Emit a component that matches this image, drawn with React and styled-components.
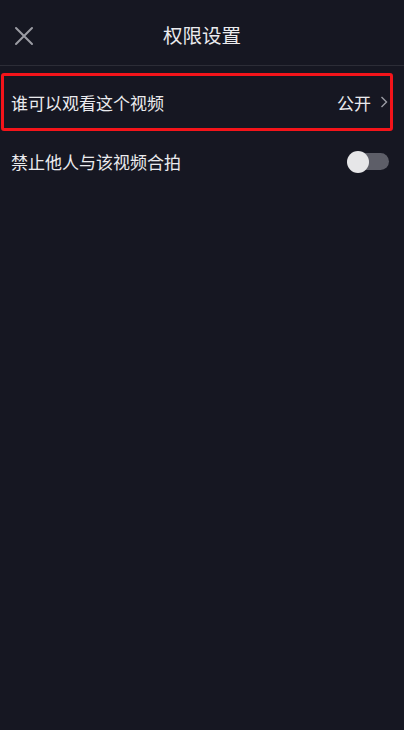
import React from 'react';
import styled, { createGlobalStyle } from 'styled-components';

const COLORS = {
  bg: '#161722',
  text: '#ebebee',
  muted: '#9b9ca4',
  divider: '#2c2d37',
  highlight: '#f4141a',
  track: '#5d5e68',
  knob: '#e6e6e8',
};

const GlobalStyle = createGlobalStyle`
  html, body {
    margin: 0;
    padding: 0;
    background: ${COLORS.bg};
  }
  body {
    font-family: "Noto Sans CJK SC", "Noto Sans", sans-serif;
    color: ${COLORS.text};
  }
`;

const CloseIcon = () => (
  <svg width="20" height="20" viewBox="0 0 20 20">
    <path
      d="M2 2 L18 18 M18 2 L2 18"
      stroke={COLORS.muted}
      strokeWidth="2"
      strokeLinecap="round"
      fill="none"
    />
  </svg>
);

const Chevron = () => (
  <svg width="8" height="12" viewBox="0 0 8 12">
    <path
      d="M1.5 1 L6.5 6 L1.5 11"
      stroke={COLORS.muted}
      strokeWidth="1.4"
      fill="none"
    />
  </svg>
);

export default function App() {
  return (
    <>
      <GlobalStyle />
      <Page>
        <Header>
          <CloseButton>
            <CloseIcon />
          </CloseButton>
          <Title>权限设置</Title>
        </Header>

        <List>
          <Highlight>
            <Row>
              <Label>谁可以观看这个视频</Label>
              <Value>
                公开
                <Chevron />
              </Value>
            </Row>
          </Highlight>

          <ToggleRow>
            <Label>禁止他人与该视频合拍</Label>
            <Toggle>
              <Track />
              <Knob />
            </Toggle>
          </ToggleRow>
        </List>
      </Page>
    </>
  );
}

const Page = styled.div`
  width: 404px;
  min-height: 730px;
  background: ${COLORS.bg};
`;

const Header = styled.div`
  position: relative;
  height: 65px;
  display: flex;
  align-items: center;
  justify-content: center;
  border-bottom: 1px solid ${COLORS.divider};
`;

const CloseButton = styled.button`
  position: absolute;
  left: 14px;
  top: 26px;
  padding: 0;
  background: transparent;
  border: none;
  display: flex;
`;

const Title = styled.div`
  font-size: 19.5px;
  line-height: 1;
  color: ${COLORS.text};
  margin-top: 5px;
`;

const List = styled.div`
  display: flex;
  flex-direction: column;
  padding-top: 7px;
`;

const Highlight = styled.div`
  margin: 0 11px 0 1px;
  height: 58px;
  box-sizing: border-box;
  border: 3px solid ${COLORS.highlight};
  border-radius: 3px;
  display: flex;
`;

const Row = styled.div`
  flex: 1;
  display: flex;
  align-items: center;
  justify-content: space-between;
  padding: 0 2px 0 7px;
`;

const Label = styled.span`
  font-size: 17px;
  line-height: 1;
  color: ${COLORS.text};
`;

const Value = styled.span`
  display: flex;
  align-items: center;
  gap: 9px;
  font-size: 17px;
  line-height: 1;
  color: ${COLORS.text};
`;

const ToggleRow = styled.div`
  height: 61px;
  display: flex;
  align-items: center;
  justify-content: space-between;
  padding: 0 15px 0 11px;
`;

const Toggle = styled.div`
  position: relative;
  width: 42px;
  height: 22px;
  display: flex;
  align-items: center;
  justify-content: flex-end;
`;

const Track = styled.div`
  width: 36px;
  height: 17px;
  border-radius: 9px;
  background: ${COLORS.track};
`;

const Knob = styled.div`
  position: absolute;
  left: 0;
  top: 0;
  width: 22px;
  height: 22px;
  border-radius: 50%;
  background: ${COLORS.knob};
`;
